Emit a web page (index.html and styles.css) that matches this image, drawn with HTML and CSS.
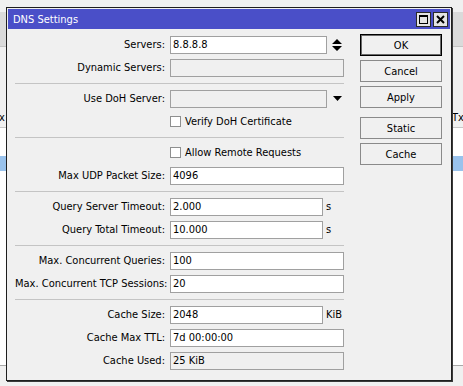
FILE: index.html
```html
<!DOCTYPE html>
<html lang="en">
<head>
    <meta charset="UTF-8">
    <title>DNS Settings</title>
    <link rel="stylesheet" href="styles.css">
</head>
<body>
    <!-- app behind the dialog -->
    <div class="desk">
        <div class="desk-top"></div>
        <div class="desk-tool"></div>
        <div class="desk-gap"></div>
        <div class="list-head"><span>x</span><span class="col-tx">Tx</span></div>
        <div class="list-row"></div>
        <div class="list-row"></div>
        <div class="list-row selected"></div>
        <div class="list-rest"></div>
        <div class="status"></div>
    </div>

    <div class="window">
        <div class="titlebar">
            <span class="title">DNS Settings</span>
            <div class="tb-buttons">
                <span class="tb-btn">
                    <svg width="9" height="9" viewBox="0 0 9 9"><rect x="0.5" y="0.5" width="8" height="8" fill="none" stroke="#000"/><rect x="0" y="0" width="9" height="2" fill="#000"/></svg>
                </span>
                <span class="tb-btn">
                    <svg width="9" height="9" viewBox="0 0 9 9"><path d="M1 1 L8 8 M8 1 L1 8" stroke="#000" stroke-width="2"/></svg>
                </span>
            </div>
        </div>

        <div class="content">
            <div class="form">
                <div class="row">
                    <label class="lbl">Servers:</label>
                    <input class="field mid" value="8.8.8.8">
                    <span class="spin">
                        <svg width="10" height="12" viewBox="0 0 10 12"><path d="M5 0 L10 5 L0 5 Z M0 7 L10 7 L5 12 Z" fill="#000"/></svg>
                    </span>
                </div>
                <div class="row">
                    <label class="lbl">Dynamic Servers:</label>
                    <input class="field off" value="" disabled>
                </div>
                <div class="sep"></div>
                <div class="row">
                    <label class="lbl">Use DoH Server:</label>
                    <input class="field mid off" value="" disabled>
                    <span class="drop">
                        <svg width="9" height="5" viewBox="0 0 9 5"><path d="M0 0 L9 0 L4.5 5 Z" fill="#000"/></svg>
                    </span>
                </div>
                <div class="row">
                    <span class="check"></span>
                    <span class="check-text">Verify DoH Certificate</span>
                </div>
                <div class="sep"></div>
                <div class="row">
                    <span class="check"></span>
                    <span class="check-text">Allow Remote Requests</span>
                </div>
                <div class="row">
                    <label class="lbl">Max UDP Packet Size:</label>
                    <input class="field" value="4096">
                </div>
                <div class="sep"></div>
                <div class="row">
                    <label class="lbl">Query Server Timeout:</label>
                    <input class="field short" value="2.000">
                    <span class="unit">s</span>
                </div>
                <div class="row">
                    <label class="lbl">Query Total Timeout:</label>
                    <input class="field short" value="10.000">
                    <span class="unit">s</span>
                </div>
                <div class="sep"></div>
                <div class="row">
                    <label class="lbl">Max. Concurrent Queries:</label>
                    <input class="field" value="100">
                </div>
                <div class="row">
                    <label class="lbl">Max. Concurrent TCP Sessions:</label>
                    <input class="field" value="20">
                </div>
                <div class="sep"></div>
                <div class="row">
                    <label class="lbl">Cache Size:</label>
                    <input class="field short" value="2048">
                    <span class="unit">KiB</span>
                </div>
                <div class="row">
                    <label class="lbl">Cache Max TTL:</label>
                    <input class="field" value="7d 00:00:00">
                </div>
                <div class="row">
                    <label class="lbl">Cache Used:</label>
                    <input class="field off" value="25 KiB" disabled>
                </div>
            </div>

            <div class="buttons">
                <button class="btn default">OK</button>
                <button class="btn">Cancel</button>
                <button class="btn">Apply</button>
                <button class="btn group">Static</button>
                <button class="btn">Cache</button>
            </div>
        </div>
    </div>
</body>
</html>
```
FILE: styles.css
```css
body {
    margin: 0;
    width: 463px;
    height: 386px;
    overflow: hidden;
    position: relative;
    background-color: #f0f0f0;
    font-family: Tahoma, "DejaVu Sans Condensed", "Liberation Sans", sans-serif;
    font-size: 11px;
    color: #000;
}

/* background application */
.desk {
    display: flex;
    flex-direction: column;
    height: 386px;
}
.desk-top {
    height: 12px;
    background-color: #f0f0f0;
}
.desk-tool {
    height: 34px;
    background-color: #dadada;
    border-bottom: 1px solid #c4c4c4;
}
.desk-gap {
    height: 60px;
}
.list-head {
    height: 20px;
    display: flex;
    justify-content: space-between;
    align-items: center;
    border-bottom: 1px solid #c8c8c8;
}
.list-head span {
    margin-left: -1px;
}
.list-head .col-tx {
    width: 11px;
    border-left: 1px solid #c8c8c8;
    padding-left: 1px;
}
.list-row {
    height: 14px;
    background-color: #fff;
}
.list-row.selected {
    height: 15px;
    background-color: #99c2ec;
}
.list-rest {
    flex: 1;
    background-color: #fff;
}
.status {
    height: 20px;
    border-top: 1px solid #a8a8a8;
    background-color: #f0f0f0;
}

/* dialog window */
.window {
    position: absolute;
    left: 6px;
    top: 7px;
    width: 446px;
    height: 374px;
    box-sizing: border-box;
    border: 1px solid #1e1e1e;
    box-shadow: 1px 1px 0 #3a3a3a;
    padding: 1px;
    background-color: #f0f0f0;
}
.titlebar {
    height: 20px;
    background-color: #4a4fc8;
    display: flex;
    align-items: center;
    justify-content: space-between;
    padding-left: 5px;
    padding-right: 2px;
}
.title {
    color: #fff;
    font-size: 11px;
}
.tb-buttons {
    display: flex;
    gap: 2px;
}
.tb-btn {
    width: 15px;
    height: 15px;
    box-sizing: border-box;
    border: 1px solid #2a2a2a;
    background-color: #e4e4e4;
    display: flex;
    align-items: center;
    justify-content: center;
}

.content {
    display: flex;
    padding-left: 7px;
}
.form {
    width: 329px;
    padding-top: 4px;
}
.row {
    height: 23px;
    display: flex;
    align-items: center;
}
.lbl {
    width: 155px;
    box-sizing: border-box;
    padding-right: 5px;
    text-align: right;
    white-space: nowrap;
}
.field {
    width: 174px;
    height: 18px;
    box-sizing: border-box;
    margin: 0;
    padding: 0 2px;
    border: 1px solid #a0a0a0;
    border-radius: 0;
    background-color: #fff;
    font: inherit;
    color: #000;
    outline: none;
}
.field.off {
    background-color: #f0f0f0;
}
.field.mid {
    width: 157px;
}
.field.short {
    width: 153px;
}
.unit {
    margin-left: 3px;
}
.spin {
    margin-left: 5px;
    display: flex;
}
.drop {
    margin-left: 6px;
    display: flex;
}
.check {
    width: 11px;
    height: 11px;
    box-sizing: border-box;
    margin-left: 155px;
    border: 1px solid #8e8f8f;
    background-color: #fff;
}
.check-text {
    margin-left: 4px;
}
.sep {
    height: 8px;
    box-sizing: border-box;
    padding-top: 4px;
}
.sep::before {
    content: "";
    display: block;
    border-top: 1px solid #c4c4c4;
}

.buttons {
    display: flex;
    flex-direction: column;
    gap: 4px;
    margin-left: 16px;
    padding-top: 5px;
}
.btn {
    width: 82px;
    height: 22px;
    box-sizing: border-box;
    margin: 0;
    padding: 0;
    border: 1px solid #8a8a8a;
    border-radius: 0;
    background-color: #f0f0f0;
    font: inherit;
    color: #000;
}
.btn.default {
    border-color: #000;
    box-shadow: inset 0 0 0 1px #6a6a6a;
}
.btn.group {
    margin-top: 5px;
}
```
